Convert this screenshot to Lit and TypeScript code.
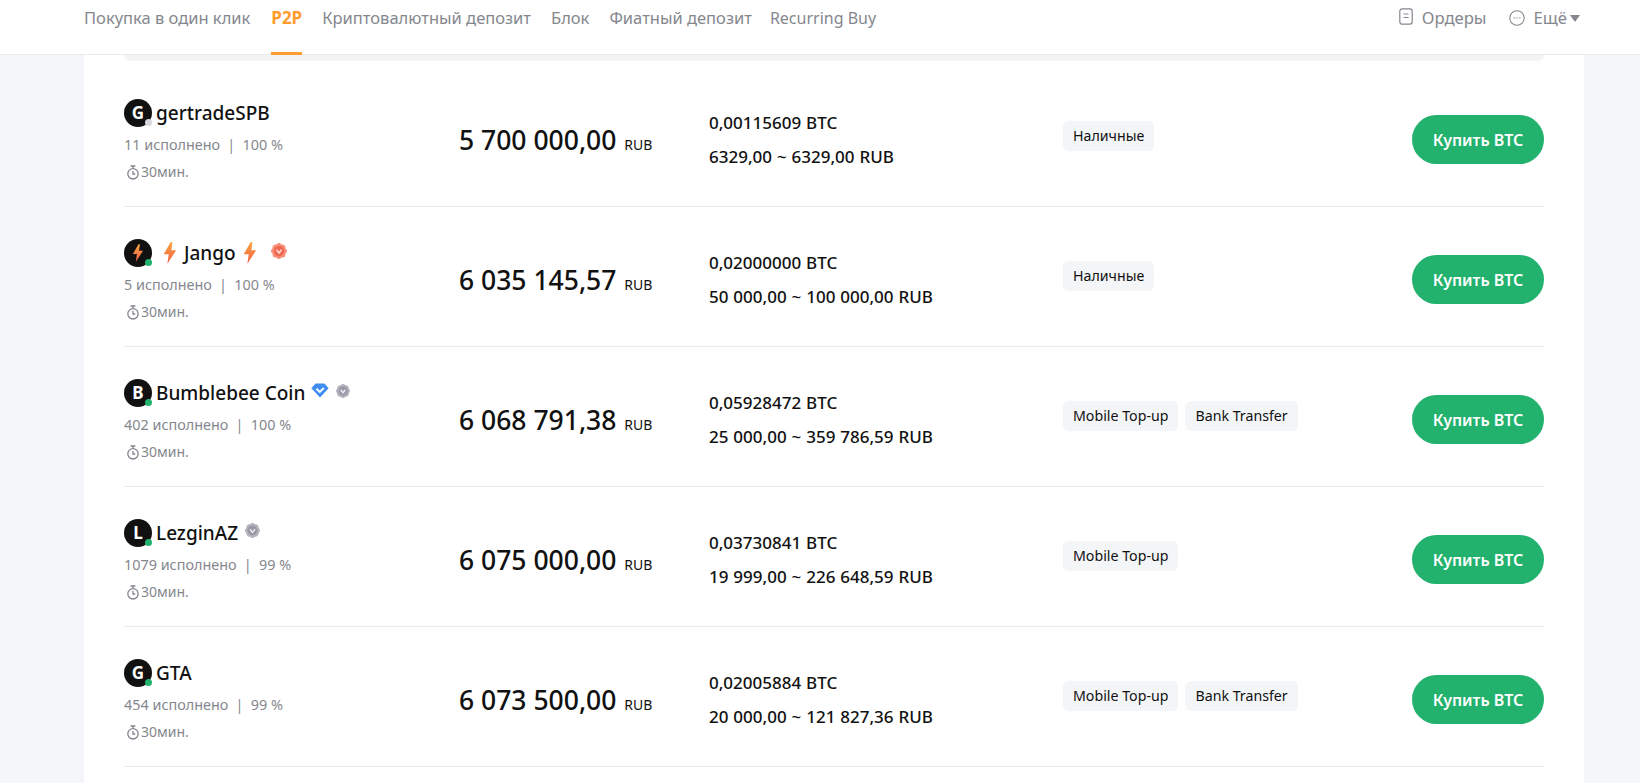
import { html, css, LitElement, svg } from "lit";
import { customElement } from "lit/decorators.js";
import { classMap } from "lit/directives/class-map.js";

const bolt = (w: number, h: number) => html`<svg class="bolt" width=${w} height=${h} viewBox="0 0 12 20">
  <defs>
    <linearGradient id="boltFill" x1="0" y1="0" x2="0" y2="1">
      <stop offset="0" stop-color="#f9a23c" />
      <stop offset="1" stop-color="#f0604a" />
    </linearGradient>
  </defs>
  <path d="M6.5 0.3 0.3 11.2h4.5l-1.2 8.6 8-12.2H7.2l1-7.3z" fill="url(#boltFill)" />
</svg>`;

const seal = (fill: string, ring: string, size = 17) => html`<svg class="seal" width=${size} height=${size} viewBox="0 0 17 17">
  ${[0, 45, 90, 135].map(
    (a) => svg`<rect x="2.6" y="2.6" width="11.8" height="11.8" rx="2.4" fill=${ring} transform="rotate(${a} 8.5 8.5)" />`
  )}
  <circle cx="8.5" cy="8.5" r="5" fill=${fill} />
  <path d="M6 7.2 8.5 10.4 11 7.2" fill="none" stroke="#fff" stroke-opacity=".8" stroke-width="1.5" />
</svg>`;

const diamond = html`<svg class="seal" width="18" height="15" viewBox="0 0 18 15">
  <path d="M4.6 0.6h8.8L17.6 5.2 9 14.4 0.4 5.2z" fill="#3f8cf2" />
  <path d="M5.4 5.8 8.8 9 12.8 5" fill="none" stroke="#fff" stroke-width="1.9" />
</svg>`;

const timer = html`<svg class="timer" width="14" height="15" viewBox="0 0 14 15" fill="none" stroke="#83858c" stroke-width="1.3">
  <circle cx="7" cy="8.8" r="5.2" />
  <path d="M4.6 1h4.8M7 1v2.4M7 6v3h2.2" />
</svg>`;

type Offer = {
  letter?: string;
  name: string;
  online: boolean;
  done: string;
  rate: string;
  price: string;
  amount: string;
  limits: string;
  tags: string[];
  marks?: "jango" | "bumble" | "lezgin";
};

const offers: Offer[] = [
  { letter: "G", name: "gertradeSPB", online: false, done: "11", rate: "100", price: "5 700 000,00", amount: "0,00115609", limits: "6329,00 ~ 6329,00", tags: ["Наличные"] },
  { name: "Jango", online: true, done: "5", rate: "100", price: "6 035 145,57", amount: "0,02000000", limits: "50 000,00 ~ 100 000,00", tags: ["Наличные"], marks: "jango" },
  { letter: "B", name: "Bumblebee Coin", online: true, done: "402", rate: "100", price: "6 068 791,38", amount: "0,05928472", limits: "25 000,00 ~ 359 786,59", tags: ["Mobile Top-up", "Bank Transfer"], marks: "bumble" },
  { letter: "L", name: "LezginAZ", online: true, done: "1079", rate: "99", price: "6 075 000,00", amount: "0,03730841", limits: "19 999,00 ~ 226 648,59", tags: ["Mobile Top-up"], marks: "lezgin" },
  { letter: "G", name: "GTA", online: true, done: "454", rate: "99", price: "6 073 500,00", amount: "0,02005884", limits: "20 000,00 ~ 121 827,36", tags: ["Mobile Top-up", "Bank Transfer"] },
];

const tabs = ["Покупка в один клик", "P2P", "Криптовалютный депозит", "Блок", "Фиатный депозит", "Recurring Buy"];

@customElement("app-root")
export class AppRoot extends LitElement {
  static styles = css`
    :host {
      display: block;
      height: 783px;
      overflow: hidden;
      background: #f5f6fa;
      font-family: "Noto Sans", "Open Sans", sans-serif;
      color: #111;
    }
    .head {
      height: 55px;
      box-sizing: border-box;
      padding: 0 60px 0 84px;
      background: #fff;
      border-bottom: 1px solid #e9ebef;
      display: flex;
      justify-content: space-between;
    }
    .tabs {
      display: flex;
      gap: 20px;
    }
    .tab {
      height: 55px;
      box-sizing: border-box;
      padding-top: 5px;
      font-size: 16.5px;
      line-height: 26px;
      color: #85878e;
    }
    .tab.on {
      color: #ff9c2e;
      font-size: 17px;
      font-weight: 700;
      margin-left: 1px;
      border-bottom: 3px solid #ff9c2e;
    }
    .tab.latin {
      font-size: 16px;
      margin-left: -2px;
    }
    .tools {
      display: flex;
      gap: 22px;
      padding-top: 5px;
      font-size: 16.7px;
      line-height: 26px;
      color: #85878e;
    }
    .tool {
      display: flex;
      align-items: flex-start;
      gap: 9px;
    }
    .tool svg {
      margin-top: 3px;
    }
    .tool svg.dots {
      margin-top: 5px;
    }
    .more .caret {
      width: 0;
      height: 0;
      margin: 10px 0 0 -6px;
      border: 5px solid transparent;
      border-top: 7px solid #85878e;
      border-bottom: 0;
    }
    .panel {
      margin: 0 56px 0 84px;
      background: #fff;
      padding: 0 40px 40px;
    }
    .strip {
      height: 6px;
      background: #f3f4f6;
      border-radius: 0 0 10px 10px;
      margin-bottom: 6px;
    }
    .row {
      height: 140px;
      box-sizing: border-box;
      border-bottom: 1px solid #ebebeb;
      display: grid;
      grid-template-columns: 335px 250px 354px 1fr auto;
      align-items: center;
      padding-top: 6px;
    }
    .who {
      display: flex;
      flex-direction: column;
      padding-top: 2px;
    }
    .name {
      display: flex;
      align-items: center;
      height: 30px;
      gap: 2px;
      font-size: 19px;
      font-weight: 500;
      line-height: 30px;
    }
    .avatar {
      position: relative;
      width: 28px;
      height: 28px;
      border-radius: 50%;
      background: #111;
      color: #fff;
      font-size: 17px;
      font-weight: 700;
      display: flex;
      align-items: center;
      justify-content: center;
      margin-right: 2px;
      flex: none;
    }
    .dot {
      position: absolute;
      right: 0;
      bottom: 1px;
      width: 7px;
      height: 7px;
      border-radius: 50%;
      background: #d5d7dc;
    }
    .dot.live {
      background: #22b26e;
    }
    .seal {
      margin-left: 4px;
      margin-top: -5px;
    }
    .pad {
      width: 5px;
    }
    .stat {
      margin-top: 6px;
      font-size: 14.4px;
      line-height: 22px;
      color: #85878e;
      white-space: nowrap;
    }
    .stat i {
      font-style: normal;
      margin: 0 3.5px;
    }
    .time {
      display: flex;
      align-items: center;
      gap: 1px;
      margin: 5px 0 0 2px;
      font-size: 14px;
      line-height: 22px;
      color: #85878e;
    }
    .price {
      font-size: 26.5px;
      font-weight: 550;
      white-space: nowrap;
    }
    .price small {
      font-size: 14px;
      font-weight: 400;
      margin-left: 1px;
    }
    .limits {
      font-size: 17px;
      font-weight: 500;
      line-height: 34px;
      word-spacing: 0.5px;
    }
    .tags {
      display: flex;
      gap: 7px;
      margin-bottom: 7px;
    }
    .tag {
      height: 30px;
      box-sizing: border-box;
      padding: 0 10px;
      border-radius: 6px;
      background: #f4f5f7;
      font-size: 14.2px;
      line-height: 30px;
    }
    .buy {
      width: 132px;
      height: 49px;
      border: 0;
      border-radius: 25px;
      background: #22b26e;
      color: #fff;
      font: 600 16px "Noto Sans", sans-serif;
    }
  `;

  private renderName(o: Offer) {
    const avatar = html`<span class="avatar">
      ${o.letter ?? bolt(12, 18)}
      <span class=${classMap({ dot: true, live: o.online })}></span>
    </span>`;
    if (o.marks === "jango") {
      return html`${avatar}&nbsp;${bolt(14, 22)}&nbsp;${o.name}&nbsp;${bolt(14, 22)}
        <span class="pad"></span>${seal("#f0684f", "#f8907a", 18)}`;
    }
    if (o.marks === "bumble") {
      return html`${avatar}${o.name}${diamond}${seal("#9b98a6", "#b7b5c0", 16)}`;
    }
    if (o.marks === "lezgin") {
      return html`${avatar}${o.name}${seal("#9b98a6", "#b7b5c0")}`;
    }
    return html`${avatar}${o.name}`;
  }

  private renderRow(o: Offer) {
    return html`<div class="row">
      <div class="who">
        <div class="name">${this.renderName(o)}</div>
        <div class="stat">${o.done} исполнено<i>&nbsp;|&nbsp;</i>${o.rate} %</div>
        <div class="time">${timer}30мин.</div>
      </div>
      <div class="price">${o.price} <small>RUB</small></div>
      <div class="limits">
        <div>${o.amount} BTC</div>
        <div>${o.limits} RUB</div>
      </div>
      <div class="tags">${o.tags.map((t) => html`<span class="tag">${t}</span>`)}</div>
      <button class="buy">Купить BTC</button>
    </div>`;
  }

  render() {
    return html`
      <div class="head">
        <div class="tabs">
          ${tabs.map(
            (t) => html`<div class=${classMap({ tab: true, on: t === "P2P", latin: t === "Recurring Buy" })}>${t}</div>`
          )}
        </div>
        <div class="tools">
          <div class="tool">
            <svg width="14" height="18" viewBox="0 0 14 18" fill="none" stroke="#85878e" stroke-width="1.2">
              <rect x="0.8" y="0.8" width="12.4" height="15.4" rx="2.4" />
              <path d="M4.5 6h5M4.5 9.5h5" />
            </svg>
            Ордеры
          </div>
          <div class="tool more">
            <svg class="dots" width="16" height="16" viewBox="0 0 16 16" fill="none" stroke="#85878e" stroke-width="1.1">
              <circle cx="8" cy="8" r="7.2" />
              <path d="M4.6 8h1M7.5 8h1M10.4 8h1" stroke-width="1.3" />
            </svg>
            Ещё
            <span class="caret"></span>
          </div>
        </div>
      </div>
      <div class="panel">
        <div class="strip"></div>
        ${offers.map((o) => this.renderRow(o))}
      </div>
    `;
  }
}
